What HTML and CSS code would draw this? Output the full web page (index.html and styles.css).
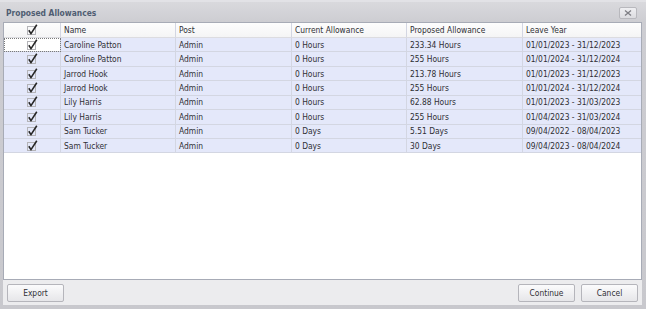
FILE: index.html
```html
<!DOCTYPE html>
<html>
<head>
<meta charset="utf-8">
<link rel="stylesheet" href="styles.css">
</head>
<body>
<div class="window">
  <div class="titlebar">
    <span class="title">Proposed Allowances</span>
    <span class="close"><svg width="8" height="6" viewBox="0 0 8 6"><path d="M1 0.5 L7 5.5 M7 0.5 L1 5.5" stroke="#7e7e84" stroke-width="1.3"/></svg></span>
  </div>
  <div class="grid">
    <div class="row head">
      <div class="cell chk"><svg width="12" height="12" viewBox="0 0 12 12"><rect x="1.5" y="2.5" width="8" height="8" fill="none" stroke="#b4b4b8"/><path d="M2.8 6.2 L5 9.6 L10.8 0.8" fill="none" stroke="#262626" stroke-width="1.6"/></svg></div>
      <div class="cell">Name</div>
      <div class="cell">Post</div>
      <div class="cell">Current Allowance</div>
      <div class="cell">Proposed Allowance</div>
      <div class="cell">Leave Year</div>
    </div>
    <div class="row">
      <div class="cell chk focus"><svg width="12" height="12" viewBox="0 0 12 12"><rect x="1.5" y="2.5" width="8" height="8" fill="none" stroke="#b4b4b8"/><path d="M2.8 6.2 L5 9.6 L10.8 0.8" fill="none" stroke="#262626" stroke-width="1.6"/></svg></div>
      <div class="cell">Caroline Patton</div><div class="cell">Admin</div><div class="cell">0 Hours</div><div class="cell">233.34 Hours</div><div class="cell">01/01/2023 - 31/12/2023</div>
    </div>
    <div class="row">
      <div class="cell chk"><svg width="12" height="12" viewBox="0 0 12 12"><rect x="1.5" y="2.5" width="8" height="8" fill="none" stroke="#b4b4b8"/><path d="M2.8 6.2 L5 9.6 L10.8 0.8" fill="none" stroke="#262626" stroke-width="1.6"/></svg></div>
      <div class="cell">Caroline Patton</div><div class="cell">Admin</div><div class="cell">0 Hours</div><div class="cell">255 Hours</div><div class="cell">01/01/2024 - 31/12/2024</div>
    </div>
    <div class="row">
      <div class="cell chk"><svg width="12" height="12" viewBox="0 0 12 12"><rect x="1.5" y="2.5" width="8" height="8" fill="none" stroke="#b4b4b8"/><path d="M2.8 6.2 L5 9.6 L10.8 0.8" fill="none" stroke="#262626" stroke-width="1.6"/></svg></div>
      <div class="cell">Jarrod Hook</div><div class="cell">Admin</div><div class="cell">0 Hours</div><div class="cell">213.78 Hours</div><div class="cell">01/01/2023 - 31/12/2023</div>
    </div>
    <div class="row">
      <div class="cell chk"><svg width="12" height="12" viewBox="0 0 12 12"><rect x="1.5" y="2.5" width="8" height="8" fill="none" stroke="#b4b4b8"/><path d="M2.8 6.2 L5 9.6 L10.8 0.8" fill="none" stroke="#262626" stroke-width="1.6"/></svg></div>
      <div class="cell">Jarrod Hook</div><div class="cell">Admin</div><div class="cell">0 Hours</div><div class="cell">255 Hours</div><div class="cell">01/01/2024 - 31/12/2024</div>
    </div>
    <div class="row">
      <div class="cell chk"><svg width="12" height="12" viewBox="0 0 12 12"><rect x="1.5" y="2.5" width="8" height="8" fill="none" stroke="#b4b4b8"/><path d="M2.8 6.2 L5 9.6 L10.8 0.8" fill="none" stroke="#262626" stroke-width="1.6"/></svg></div>
      <div class="cell">Lily Harris</div><div class="cell">Admin</div><div class="cell">0 Hours</div><div class="cell">62.88 Hours</div><div class="cell">01/01/2023 - 31/03/2023</div>
    </div>
    <div class="row">
      <div class="cell chk"><svg width="12" height="12" viewBox="0 0 12 12"><rect x="1.5" y="2.5" width="8" height="8" fill="none" stroke="#b4b4b8"/><path d="M2.8 6.2 L5 9.6 L10.8 0.8" fill="none" stroke="#262626" stroke-width="1.6"/></svg></div>
      <div class="cell">Lily Harris</div><div class="cell">Admin</div><div class="cell">0 Hours</div><div class="cell">255 Hours</div><div class="cell">01/04/2023 - 31/03/2024</div>
    </div>
    <div class="row">
      <div class="cell chk"><svg width="12" height="12" viewBox="0 0 12 12"><rect x="1.5" y="2.5" width="8" height="8" fill="none" stroke="#b4b4b8"/><path d="M2.8 6.2 L5 9.6 L10.8 0.8" fill="none" stroke="#262626" stroke-width="1.6"/></svg></div>
      <div class="cell">Sam Tucker</div><div class="cell">Admin</div><div class="cell">0 Days</div><div class="cell">5.51 Days</div><div class="cell">09/04/2022 - 08/04/2023</div>
    </div>
    <div class="row">
      <div class="cell chk"><svg width="12" height="12" viewBox="0 0 12 12"><rect x="1.5" y="2.5" width="8" height="8" fill="none" stroke="#b4b4b8"/><path d="M2.8 6.2 L5 9.6 L10.8 0.8" fill="none" stroke="#262626" stroke-width="1.6"/></svg></div>
      <div class="cell">Sam Tucker</div><div class="cell">Admin</div><div class="cell">0 Days</div><div class="cell">30 Days</div><div class="cell">09/04/2023 - 08/04/2024</div>
    </div>
  </div>
  <div class="buttonbar">
    <button class="btn">Export</button>
    <div class="spacer"></div>
    <button class="btn">Continue</button>
    <button class="btn">Cancel</button>
  </div>
</div>
</body>
</html>
```

FILE: styles.css
```css
html, body {
  margin: 0;
  padding: 0;
}
body {
  width: 646px;
  height: 309px;
  overflow: hidden;
  background: #c4c4c9;
  font-family: "DejaVu Sans Condensed", "Liberation Sans", sans-serif;
  font-size: 8.4px;
  color: #2f2f34;
}
.window {
  width: 646px;
  height: 309px;
  display: flex;
  flex-direction: column;
  box-sizing: border-box;
  border-top: 2px solid #e2e2e6;
  background: linear-gradient(#d9d9dd, #cdcdd2 20px, #c8c8cd);
}
.titlebar {
  height: 20px;
  display: flex;
  align-items: center;
  justify-content: space-between;
  padding: 1px 9px 0 6px;
  box-sizing: border-box;
}
.title {
  font-weight: bold;
  font-size: 8.4px;
  color: #4f5d72;
}
.close {
  width: 18px;
  height: 12px;
  box-sizing: border-box;
  border: 1px solid #b8b8bd;
  border-radius: 2px;
  background: linear-gradient(#efeff2, #dcdce0);
  display: flex;
  align-items: center;
  justify-content: center;
}
.grid {
  margin: 0 4px 0 3px;
  height: 258px;
  background: #fff;
  border: 1px solid #a7abb6;
  box-sizing: border-box;
  overflow: hidden;
}
.row {
  display: grid;
  grid-template-columns: 57px 115px 116px 115px 116px 118px;
  height: 14.43px;
  background: #e4e8fa;
}
.row.head {
  height: 15px;
  background: linear-gradient(#fdfdfd, #f4f4f5);
}
.cell {
  box-sizing: border-box;
  border-right: 1px solid #d3d6e2;
  border-bottom: 1px solid #d3d6e2;
  padding-left: 3px;
  display: flex;
  align-items: center;
  white-space: nowrap;
  overflow: hidden;
}
.row.head .cell {
  border-bottom-color: #dcdce0;
}
.cell:last-child {
  border-right: none;
}
.cell.chk {
  justify-content: center;
  padding: 0;
}
.cell.focus {
  background: #fff;
  outline: 1px dotted #7a7a7a;
  outline-offset: -1px;
}
.buttonbar {
  height: 25px;
  margin: 0 4px 4px 3px;
  background: #ececee;
  display: flex;
  align-items: center;
  padding: 0 4px;
  gap: 6px;
}
.spacer {
  flex: 1;
}
.btn {
  height: 18px;
  width: 57px;
  padding: 0;
  font-family: inherit;
  font-size: 8.4px;
  color: #2f2f34;
  border: 1px solid #b5b5bb;
  border-radius: 2px;
  background: linear-gradient(#fbfbfc, #e6e6e9);
}
```
